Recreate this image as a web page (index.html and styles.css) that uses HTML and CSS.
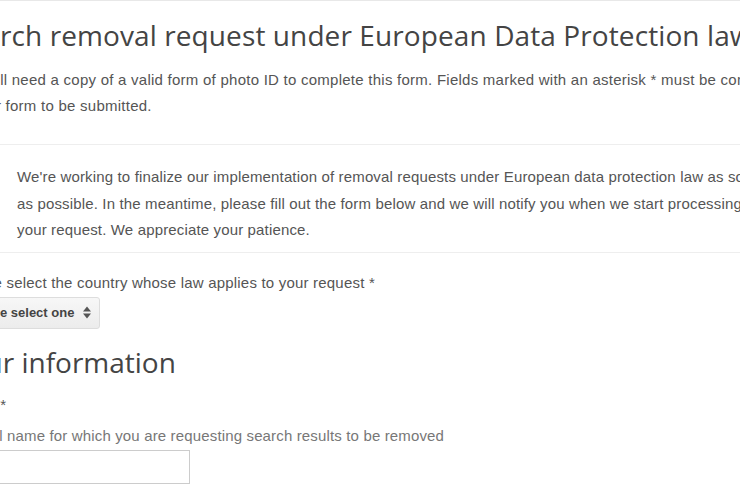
FILE: index.html
```html
<!DOCTYPE html>
<html lang="en">
<head>
    <meta charset="UTF-8">
    <meta name="viewport" content="width=device-width, initial-scale=1.0">
    <title>Search removal request</title>
    <link rel="stylesheet" href="styles.css">
</head>
<body>
    <div class="page">
        <h1 class="title">Search removal request under European Data Protection law</h1>
        <p class="intro">You'll need a copy of a valid form of photo ID to complete this form. Fields marked with an asterisk * must be completed in order for your form to be submitted.</p>

        <div class="notice">
            <p>We're working to finalize our implementation of removal requests under European data protection law as soon as possible. In the meantime, please fill out the form below and we will notify you when we start processing your request. We appreciate your patience.</p>
        </div>

        <form id="removalForm">
            <div class="form-group">
                <label for="country">Please select the country whose law applies to your request *</label>
                <div class="select" id="country">
                    <span>Please select one</span>
                    <svg width="8" height="13" viewBox="0 0 8 13">
                        <path d="M0 5.5 L4 0.5 L8 5.5 Z M0 7.5 L4 12.5 L8 7.5 Z" fill="#555"/>
                    </svg>
                </div>
            </div>

            <h2 class="section">Your information</h2>

            <div class="form-group name-group">
                <label for="fullName">Name *</label>
                <div class="help">Full name for which you are requesting search results to be removed</div>
                <input type="text" id="fullName" name="fullName">
            </div>
        </form>
    </div>
</body>
</html>
```

FILE: styles.css
```css
body {
    margin: 0;
    background-color: white;
    font-family: "Liberation Sans", Arial, sans-serif;
    color: #555;
    overflow: hidden;
}
.page {
    width: 1000px;
    margin-left: -47px;
    border-top: 1px solid #e8e8e8;
}
.title {
    font-family: "Open Sans", sans-serif;
    font-weight: normal;
    font-size: 28px;
    letter-spacing: 0.1px;
    color: #444;
    margin: 14px 0 12px 0;
    line-height: 40px;
}
.intro {
    width: 915px;
    font-size: 15px;
    letter-spacing: 0.25px;
    line-height: 26px;
    margin: 0 0 25px 18px;
}
.notice {
    border-top: 1px solid #eee;
    border-bottom: 1px solid #eee;
    padding: 19px 0 8px 64px;
}
.notice p {
    width: 750px;
    font-size: 15px;
    letter-spacing: 0.15px;
    line-height: 26.5px;
    margin: 0;
}
.form-group {
    margin-top: 20px;
    margin-left: 2px;
}
.name-group {
    margin-top: 13px;
}
label {
    display: block;
    font-size: 15px;
    letter-spacing: 0.2px;
    line-height: 20px;
    margin-bottom: 4px;
}
.select {
    display: inline-flex;
    align-items: center;
    gap: 9px;
    height: 32px;
    box-sizing: border-box;
    padding: 0 8px 0 10px;
    border: 1px solid #ddd;
    border-radius: 3px;
    background: linear-gradient(#f7f7f7, #ececec);
    font-size: 13px;
    font-weight: bold;
    color: #444;
}
.section {
    font-family: "Open Sans", sans-serif;
    font-weight: normal;
    font-size: 28px;
    color: #444;
    margin: 13px 0 0 0;
    line-height: 40px;
}
.help {
    font-size: 15px;
    letter-spacing: 0.15px;
    line-height: 20px;
    color: #777;
    margin: 11px 0 4px 23px;
}
input[type="text"] {
    display: block;
    width: 235px;
    height: 34px;
    box-sizing: border-box;
    border: 1px solid #ccc;
    font-size: 14px;
}
```
